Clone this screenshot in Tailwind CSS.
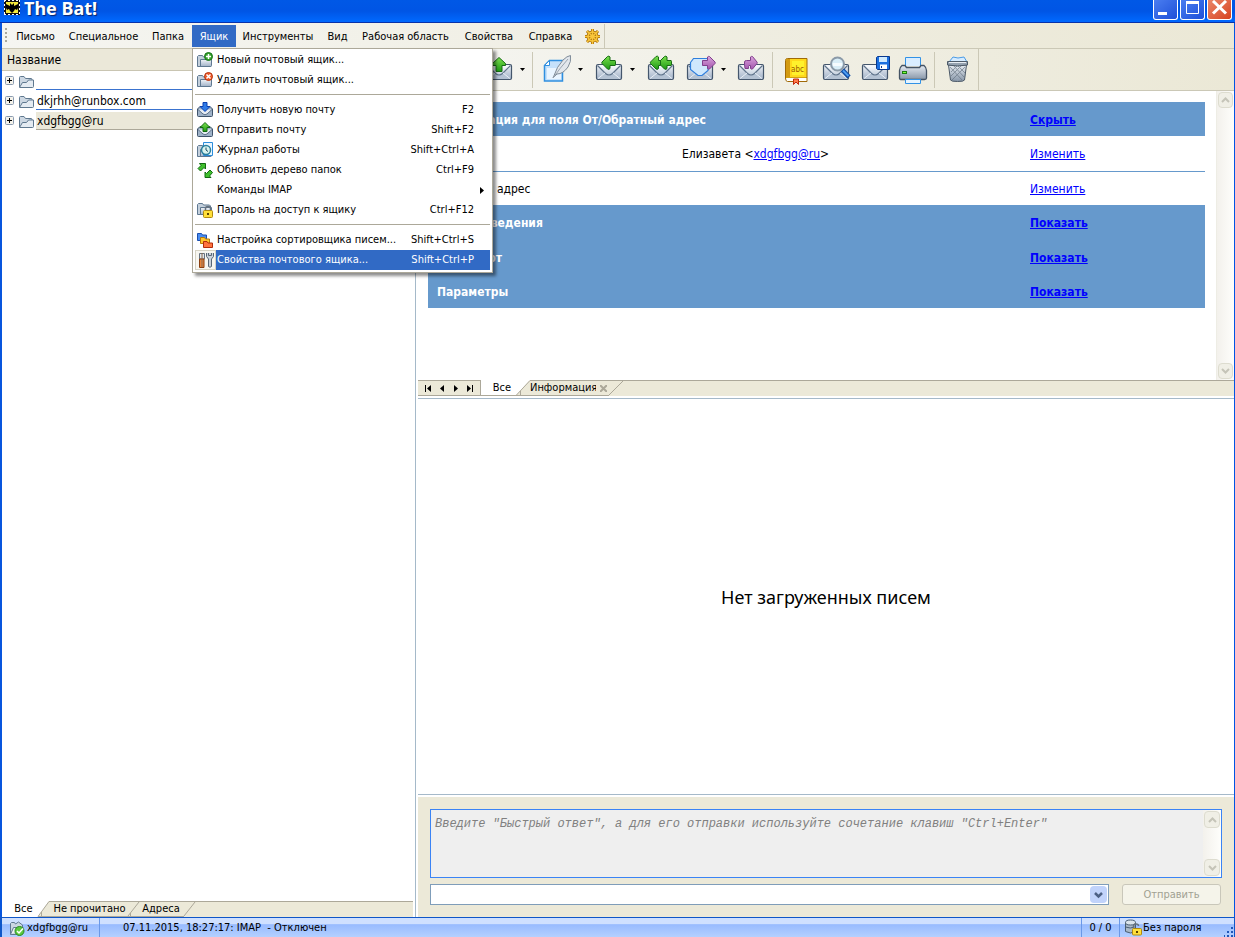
<!DOCTYPE html>
<html lang="ru">
<head>
<meta charset="utf-8">
<title>The Bat!</title>
<script src="https://cdn.jsdelivr.net/npm/@tailwindcss/browser@4"></script>
</head>
<body class="h-screen overflow-hidden bg-white font-['DejaVu_Sans_Condensed','DejaVu_Sans','Noto_Sans',sans-serif] text-[11px] leading-[14px] text-black">

<!-- Shared icon shapes -->
<svg class="absolute size-0" aria-hidden="true">
  <defs>
    <linearGradient id="gEnv" x1="0" y1="0" x2="0" y2="1"><stop offset="0" stop-color="#f1f4f8"/><stop offset="1" stop-color="#9fb0c6"/></linearGradient>
    <linearGradient id="gFlap" x1="0" y1="0" x2="0" y2="1"><stop offset="0" stop-color="#fbfcfe"/><stop offset="1" stop-color="#c3cfdd"/></linearGradient>
    <linearGradient id="gGreen" x1="0" y1="0" x2="0" y2="1"><stop offset="0" stop-color="#7be04e"/><stop offset="1" stop-color="#1f9a14"/></linearGradient>
    <linearGradient id="gPurple" x1="0" y1="0" x2="0" y2="1"><stop offset="0" stop-color="#d9a3dc"/><stop offset="1" stop-color="#a457ae"/></linearGradient>
    <linearGradient id="gGrey" x1="0" y1="0" x2="0" y2="1"><stop offset="0" stop-color="#e6ebf1"/><stop offset="1" stop-color="#8796a8"/></linearGradient>
    <symbol id="env" viewBox="0 0 32 32">
      <path d="M5 10.500h22q1.500 0 1.500 1.500v12q0 1.500-1.500 1.500H5q-1.500 0-1.500-1.500V12q0-1.500 1.500-1.500z" fill="url(#gEnv)" stroke="#44566c" stroke-width="1.200"/>
      <path d="M4.500 25l8-7h7l8 7z" fill="#b4c2d3"/>
      <path d="M4.500 11.500l8 8q3.500 3 7 0l8-8" fill="url(#gFlap)" stroke="#5f738a" stroke-width="1.200"/>
      <path d="M5 24.500l7-5.500M27 24.500l-7-5.500" stroke="#e9eff6" fill="none"/>
    </symbol>
    <symbol id="folder" viewBox="0 0 16 16">
      <path d="M1.500 13V3.500q0-1 1-1h3.500l1.500 2h5.500q1 0 1 1V7" fill="#ccd7e2" stroke="#5f788f"/>
      <path d="M1.500 13.500L4.500 8.500H8.500L10.500 6h5v6.500q0 1-1 1z" fill="#e4ebf2" stroke="#5f788f"/>
    </symbol>
    <symbol id="mailS" viewBox="0 0 16 16">
      <path d="M.5 7l2.500-2.500h10L15.500 7v6.500q0 1-1 1h-13q-1 0-1-1z" fill="#9fb2c8" stroke="#3f536b"/>
      <path d="M1 7.500L6 12q2 1.500 4 0l5-4.500" fill="#e6ecf3" stroke="#5d7189"/>
    </symbol>
    <symbol id="boxS" viewBox="0 0 16 16">
      <path d="M.5 14.500v-10l1-1h4l1 1.500h6l1 1v8.500H.5z" fill="#c4d0dc" stroke="#5f7890"/>
      <path d="M3.500 14.500V7.500h11v6q0 1-1 1z" fill="url(#gEnv)" stroke="#5f7890"/>
    </symbol>
    <symbol id="plus" viewBox="0 0 9 9">
      <rect x=".5" y=".5" width="8" height="8" rx="1" fill="#f4f2ea" stroke="#8a9bb0"/>
      <path d="M2 4.500h5M4.500 2v5" stroke="#000"/>
    </symbol>
  </defs>
</svg>

<div class="flex h-screen flex-col">
  <!-- Title bar -->
  <header class="flex h-[23px] shrink-0 items-start justify-between border-b border-[#0831a8] bg-linear-to-b from-[#0058e6] via-[#0055e5] to-[#0069ff] pl-1 pr-[3px]">
    <div class="flex items-start gap-1">
      <svg class="size-4" viewBox="0 0 16 16"><rect width="16" height="15" fill="#111"/><path d="M0 .5h16M0 14.500h16M.5 0v15M15.500 0v15" stroke="#fff" stroke-dasharray="2 2"/><path d="M2 2h12v11H2z" fill="#f6ea3c"/><path d="M2 4l2 1 2 1V3l2 2 2-2v3l2-1 2-1v4l-1 2-2-1-1 2-2 2-2-2-1-2-2 1-1-2z" fill="#000"/></svg>
      <h1 class="-mt-[3px] font-['Noto_Sans',sans-serif] text-[18px] leading-[22px] font-bold text-white [text-shadow:1px_1px_1px_#0a246a]">The Bat!</h1>
    </div>
    <div class="flex gap-[2px]">
      <button aria-label="Свернуть" class="h-5 w-[25px] rounded-b-[3px] border border-t-0 border-white bg-linear-to-br from-[#4a7df0] to-[#1f4fd8]"><svg class="size-full" viewBox="0 0 23 19"><path d="M4 13.500h9" stroke="#fff" stroke-width="3"/></svg></button>
      <button aria-label="Развернуть" class="h-5 w-[25px] rounded-b-[3px] border border-t-0 border-white bg-linear-to-br from-[#4a7df0] to-[#1f4fd8]"><svg class="size-full" viewBox="0 0 23 19"><path d="M5.500 2v11.500h12V2" fill="none" stroke="#fff"/><path d="M5 2.500h13" stroke="#fff" stroke-width="3"/></svg></button>
      <button aria-label="Закрыть" class="h-5 w-[25px] rounded-b-[3px] border border-t-0 border-white bg-linear-to-br from-[#ea8567] to-[#d6401a]"><svg class="size-full" viewBox="0 0 23 19"><path d="M5 1l13 12.500M18 1L5 13.500" stroke="#fff" stroke-width="3"/></svg></button>
    </div>
  </header>

  <div class="flex min-h-0 flex-1 flex-col border-r border-l-2 border-[#0855dd] border-r-[#0054e3]">
    <!-- Menu bar -->
    <nav class="flex h-[26px] shrink-0 items-stretch border-b border-[#cbc8b6] bg-linear-to-r from-[#f5f5f1] to-[#ebe8d6] pt-[2px]">
      <svg class="h-5 w-[7px]" viewBox="0 0 7 20"><path d="M3 4h2M3 8h2M3 12h2M3 16h2" stroke="#a9a89c" stroke-width="2"/></svg>
      <button class="w-[53px]">Письмо</button>
      <button class="w-[83px]">Специальное</button>
      <button class="w-[46px]">Папка</button>
      <div class="relative ml-px">
        <button class="h-[22px] w-11 bg-[#316ac5] pt-px text-white" aria-expanded="true">Ящик</button>
        <!-- Drop-down menu -->
        <div class="absolute top-[23px] left-0 z-10 w-[301px] border border-[#aca899] bg-white px-[2px] pt-px pb-[2px] shadow-[3px_3px_3px_rgba(0,0,0,.45)]" role="menu">
          <button role="menuitem" class="flex h-5 w-full items-center gap-1 pr-4 pl-[2px]"><svg class="size-4" viewBox="0 0 16 16"><use href="#boxS"/><circle cx="11.500" cy="4.500" r="4" fill="#35a32a" stroke="#17711a"/><path d="M9 4.500h5M11.500 2v5" stroke="#fff" stroke-width="1.500"/></svg><span>Новый почтовый ящик...</span></button>
          <button role="menuitem" class="flex h-5 w-full items-center gap-1 pr-4 pl-[2px]"><svg class="size-4" viewBox="0 0 16 16"><use href="#boxS"/><circle cx="11.500" cy="4.500" r="4" fill="#f05a28" stroke="#b3330f"/><path d="M9.500 2.500l4 4M13.500 2.500l-4 4" stroke="#fff" stroke-width="1.500"/></svg><span>Удалить почтовый ящик...</span></button>
          <hr class="my-1 h-[2px] border-0 border-t border-[#aca899]">
          <button role="menuitem" class="flex h-5 w-full items-center gap-1 pr-4 pl-[2px]"><svg class="size-4" viewBox="0 0 16 16"><use href="#mailS"/><path d="M6 .5h4v4h3L8 9.500 3 4.500h3z" fill="#2f7be8" stroke="#0b3fae"/></svg><span class="flex-1 text-left">Получить новую почту</span><kbd class="font-[inherit]">F2</kbd></button>
          <button role="menuitem" class="flex h-5 w-full items-center gap-1 pr-4 pl-[2px]"><svg class="size-4" viewBox="0 0 16 16"><use href="#mailS"/><path d="M6 9.500h4v-4h3L8 .5 3 5.500h3z" fill="url(#gGreen)" stroke="#126a12"/></svg><span class="flex-1 text-left">Отправить почту</span><kbd class="font-[inherit]">Shift+F2</kbd></button>
          <button role="menuitem" class="flex h-5 w-full items-center gap-1 pr-4 pl-[2px]"><svg class="size-4" viewBox="0 0 16 16"><use href="#boxS"/><path d="M6.500.5h9v13h-9z" fill="#eaf6ff" stroke="#2c8ddb"/><circle cx="9" cy="8" r="4.500" fill="#d9f3ee" stroke="#2a7f9c" stroke-width="1.500"/><path d="M9 5.500V8l2 1.500" fill="none" stroke="#174b66"/></svg><span class="flex-1 text-left">Журнал работы</span><kbd class="font-[inherit]">Shift+Ctrl+A</kbd></button>
          <button role="menuitem" class="flex h-5 w-full items-center gap-1 pr-4 pl-[2px]"><svg class="size-4" viewBox="0 0 16 16"><path d="M2.500 1.500H8.500V7L7 5.500 3.500 9 1 6.500l3-3z" fill="#3fc02c" stroke="#126a12"/><path d="M14 15.500H8V10l1.500 1.500L13 8l2.500 2.500L12.500 14z" fill="#3fc02c" stroke="#126a12"/></svg><span class="flex-1 text-left">Обновить дерево папок</span><kbd class="font-[inherit]">Ctrl+F9</kbd></button>
          <button role="menuitem" class="flex h-5 w-full items-center pr-[6px] pl-[22px]"><span class="flex-1 text-left">Команды IMAP</span><svg class="h-[7px] w-1" viewBox="0 0 4 7"><path d="M0 0l4 3.500L0 7z"/></svg></button>
          <button role="menuitem" class="flex h-5 w-full items-center gap-1 pr-4 pl-[2px]"><svg class="size-4" viewBox="0 0 16 16"><use href="#boxS" y="-2"/><path d="M8.500 9V6.500q0-2 2.500-2t2.500 2V9" fill="none" stroke="#66727f" stroke-width="1.500"/><rect x="6.500" y="8.500" width="9" height="7" rx="1" fill="#ffdf3a" stroke="#b08a10"/><path d="M11 11v2" stroke="#5a4300" stroke-width="2"/></svg><span class="flex-1 text-left">Пароль на доступ к ящику</span><kbd class="font-[inherit]">Ctrl+F12</kbd></button>
          <hr class="my-1 h-[2px] border-0 border-t border-[#aca899]">
          <button role="menuitem" class="flex h-5 w-full items-center gap-1 pr-4 pl-[2px]"><svg class="size-4" viewBox="0 0 16 16"><path d="M.5 8.500v-7h4l1 1.500h4v5.500z" fill="#4a8df0" stroke="#1b4fae"/><path d="M3.500 11.500v-6h4L8.500 7h4v4.500z" fill="#ffc52e" stroke="#b77a08"/><path d="M6.500 15.500v-6h3.500l1 1.500h4.500v4.500z" fill="#ff7440" stroke="#b32c0c"/></svg><span class="flex-1 text-left">Настройка сортировщика писем...</span><kbd class="font-[inherit]">Shift+Ctrl+S</kbd></button>
          <button role="menuitem" class="flex h-5 w-full items-center bg-[#316ac5] pr-4 text-white"><span class="flex h-5 w-[21px] items-center justify-center border border-[#d6d3c4] bg-[#f7f6f0]"><svg class="size-4" viewBox="0 0 16 16"><path d="M1.500 7V1.500h5V7z" fill="#dfe5ea" stroke="#66727f"/><path d="M1.500 7h4.500v8.500H1.500z" fill="#e8843a" stroke="#8a3f10"/><path d="M4 1v14" stroke="#8a6a50"/><path d="M8.500 1v3.500L10.500 7v7.500q1.500 1.500 3 0V7l2-2.500V1M10.500 1v2.500h3V1" fill="#c9d1da" stroke="#596775"/></svg></span><span class="ml-px flex-1 text-left">Свойства почтового ящика...</span><kbd class="font-[inherit]">Shift+Ctrl+P</kbd></button>
        </div>
      </div>
      <button class="w-[84px]">Инструменты</button>
      <button class="w-[35px]">Вид</button>
      <button class="w-[101px]">Рабочая область</button>
      <button class="w-[66px]">Свойства</button>
      <button class="w-[57px]">Справка</button>
      <button class="w-[25px] pl-[5px]" aria-label="Поддержка"><svg class="size-[17px]" viewBox="0 0 17 17"><g fill="none" stroke="#a56a08" stroke-width="3"><circle cx="8.500" cy="8.500" r="4.500"/><path d="M8.500 1v15M1 8.500h15M3 3l11 11M14 3L3 14"/></g><g fill="none" stroke="#f9c63a" stroke-width="1.500"><circle cx="8.500" cy="8.500" r="4.500"/><path d="M8.500 1v15M1 8.500h15M3 3l11 11M14 3L3 14"/></g></svg></button>
      <div class="-mt-px border-l border-[#cbc8b6]"></div>
    </nav>

    <div class="flex min-h-0 flex-1">
      <!-- Account tree -->
      <aside class="flex w-[414px] shrink-0 flex-col border-r border-[#a5b9c9] pr-[2px]">
        <div class="h-[22px] border-b border-[#c9c5b2] bg-[#ebe8d9] pl-[5px] text-[12px] leading-[23px]">Название</div>
        <ul class="flex-1 text-[12px] leading-[19px]">
          <li class="flex h-5 items-center pl-[3px]"><svg class="mb-px size-[9px]"><use href="#plus"/></svg><svg class="mt-px ml-1 h-4 w-4"><use href="#folder"/></svg><span class="ml-[2px] h-[18px] flex-1 border-b border-[#3a73cf]"></span></li>
          <li class="flex h-5 items-center pl-[3px]"><svg class="mb-px size-[9px]"><use href="#plus"/></svg><svg class="mt-px ml-1 h-4 w-4"><use href="#folder"/></svg><span class="ml-[2px] h-[18px] flex-1 border-b border-[#3a73cf] pl-px">dkjrhh@runbox.com</span></li>
          <li class="flex h-5 items-center pl-[3px]"><svg class="mb-px size-[9px]"><use href="#plus"/></svg><svg class="mt-px ml-1 h-4 w-4"><use href="#folder"/></svg><span class="ml-[2px] h-[18px] flex-1 border-b border-[#aca899] bg-[#ebe8d9] pl-px">xdgfbgg@ru</span></li>
        </ul>
        <div class="flex h-4 shrink-0">
          <button class="w-[35px] pl-[8px]">Все</button>
          <svg class="h-4 w-4" viewBox="0 0 16 16"><path d="M16 0H12L1 16h15z" fill="#ece9d8"/><path d="M16 .5H12L1 15.500h15M4.500 11v4" fill="none" stroke="#aca899"/></svg>
          <button class="w-[73px] border-y border-[#aca899] bg-[#ece9d8]">Не прочитано</button>
          <svg class="h-4 w-[14px] bg-[#ece9d8]" viewBox="0 0 14 16"><path d="M0 .5h14M0 15.500h14M13 1L2 15M4.500 12v3" fill="none" stroke="#aca899"/></svg>
          <button class="w-[42px] border-y border-[#aca899] bg-[#ece9d8]">Адреса</button>
          <svg class="h-4 w-[14px] bg-[#ece9d8]" viewBox="0 0 14 16"><path d="M0 .5h14M0 15.500h2M13 1L2 15" fill="none" stroke="#aca899"/></svg>
          <span class="flex-1 border-t border-[#aca899] bg-[#ece9d8]"></span>
        </div>
      </aside>

      <main class="flex min-w-0 flex-1 flex-col">
        <!-- Toolbar -->
        <div class="flex h-[42px] shrink-0 items-center border-b border-[#cbc8b6] bg-linear-to-r from-[#f5f5f1] to-[#ebe8d6] pl-[67px]">
          <button aria-label="Отправить почту" class="size-8"><svg class="size-8" viewBox="0 0 32 32"><use href="#env"/><path d="M13 17.500v-6H9.500v-2L16 3.500l6.500 6v2H19v6z" fill="url(#gGreen)" stroke="#176b14"/></svg></button>
          <button aria-label="Ещё" class="w-[14px]"><svg class="mx-auto h-[3px] w-[5px]" viewBox="0 0 5 3"><path d="M0 0h5L2.500 3z"/></svg></button>
          <i class="ml-[3px] h-9 w-px bg-[#cbc8b6]"></i>
          <button aria-label="Новое письмо" class="ml-[9px] size-8"><svg class="size-8" viewBox="0 0 32 32"><path d="M7.500 6.500h13v20.500h-18v-15.500z" fill="#c5e1fb" stroke="#2f8fe0" stroke-width="1.500"/><path d="M5 14h14v11H5z" fill="#eaf5ff"/><path d="M2.500 11.500h5v-5z" fill="#fff" stroke="#2f8fe0"/><path d="M11 24q4-12 10-18 4-4 7.500-4.500 1 6-2.500 11.500-5 7-11 7z" fill="#e3e7ec" stroke="#7e8b98"/><path d="M11 24Q18 14 26 5" fill="none" stroke="#9aa5b1"/></svg></button>
          <button aria-label="Ещё" class="w-3"><svg class="mx-auto h-[3px] w-[5px]" viewBox="0 0 5 3"><path d="M0 0h5L2.500 3z"/></svg></button>
          <button aria-label="Ответить" class="ml-[7px] size-8"><svg class="size-8" viewBox="0 0 32 32"><use href="#env"/><path d="M22 6.500h-5V3q-1-1.500-2.500-.5L9 8q-.5 1 0 1.500l5.500 5.500q1.500 1 2.500-.5V11.500h5q.5 0 .5-1v-3q0-1-.5-1z" fill="url(#gGreen)" stroke="#176b14"/></svg></button>
          <button aria-label="Ещё" class="w-[14px]"><svg class="mx-auto h-[3px] w-[5px]" viewBox="0 0 5 3"><path d="M0 0h5L2.500 3z"/></svg></button>
          <button aria-label="Ответить всем" class="ml-[6px] size-8"><svg class="size-8" viewBox="0 0 32 32"><use href="#env"/><path d="M26 6.500h-4V3q-1-1.500-2.500-.5L14 8q-.5 1 0 1.500l5.500 5.500q1.500 1 2.500-.5V11.500h4q.5 0 .5-1v-3q0-1-.5-1z" fill="url(#gGreen)" stroke="#176b14"/><path d="M15.500 6.500h-2V3q-1-1.500-2.500-.5L5.500 8q-.5 1 0 1.500L11 15q1.500 1 2.500-.5V11.500h2z" fill="url(#gGreen)" stroke="#176b14"/></svg></button>
          <button aria-label="Переслать" class="ml-2 size-8"><svg class="size-8" viewBox="0 0 32 32"><use href="#env" x="-1"/><path d="M5.500 8.500l3-4h14.500v12l-6 5h-4l-7.500-6z" fill="#cfe8fd" stroke="#2f7fdd" stroke-width="1.200"/><path d="M17.500 6.500h5V3q1-1 2-.5l5.500 5.500q.5 1 0 1.500L24.500 15q-1 .5-2-.5V11.500h-5z" fill="url(#gPurple)" stroke="#81408c"/></svg></button>
          <button aria-label="Ещё" class="w-3"><svg class="mx-auto h-[3px] w-[5px]" viewBox="0 0 5 3"><path d="M0 0h5L2.500 3z"/></svg></button>
          <button aria-label="Перенаправить" class="ml-[6px] size-8"><svg class="size-8" viewBox="0 0 32 32"><use href="#env"/><path d="M9.500 10.500V8q0-1.500 2-1.500h4V3q1-1 2-.5l4.500 5.500q.5 1 0 1.500L17.500 15q-1 .5-2-.5V11.500H14q-.5 0-.5 3h-3.500z" fill="url(#gPurple)" stroke="#81408c"/></svg></button>
          <i class="ml-[5px] h-9 w-px bg-[#cbc8b6]"></i>
          <button aria-label="Адресная книга" class="ml-2 size-8"><svg class="size-8" viewBox="0 0 32 32"><path d="M4.500 24V6.500q0-2 2-2h19.500V24z" fill="#ffd91c" stroke="#a06a08"/><path d="M5 5h4v18H5z" fill="#d39a12"/><path d="M11 7h12v14H11z" fill="#fff12c"/><path d="M4.500 24q0 3.500 2 3.500h19.500V24" fill="#fff" stroke="#a06a08"/><path d="M12.500 25h5v5.500L15 28l-2.500 2.500z" fill="#ff7a4a" stroke="#c0290d"/><text x="10" y="18" font-size="8" font-family="DejaVu Sans Condensed" fill="#a05a00">abc</text></svg></button>
          <button aria-label="Поиск" class="ml-2 size-8"><svg class="size-8" viewBox="0 0 32 32"><use href="#env" x="-1"/><path d="M21.500 16l6.500 7" stroke="#0c4ba6" stroke-width="4.500"/><path d="M22 16.500l5.500 5.500" stroke="#4d9df2" stroke-width="2"/><circle cx="16.500" cy="10" r="6.500" fill="#d9eef8" stroke="#8b9aa8" stroke-width="2"/><path d="M12 10.500h9" stroke="#f6fcff" stroke-width="3"/></svg></button>
          <button aria-label="Сохранить" class="ml-[7px] size-8"><svg class="size-8" viewBox="0 0 32 32"><use href="#env" x="-1"/><path d="M16.500 3.500l1-1h12v13h-12l-1-1z" fill="#1b6fe0" stroke="#08388e"/><path d="M19 3h8v5h-8z" fill="#cfeaff"/><path d="M20 10.500h7V15h-7z" fill="#fff"/><path d="M21.500 12v2" stroke="#08388e"/></svg></button>
          <button aria-label="Печать" class="ml-[5px] size-8"><svg class="size-8" viewBox="0 0 32 32"><path d="M8.500 12V3.500h15V12" fill="#d9edff" stroke="#3292e6"/><path d="M5 11.500h3l1.500 2h13l1.500-2h3q2.500 2 2.500 5V24q0 1.500-2 1.500h-23q-2 0-2-1.500v-7.500q0-3 2.500-5z" fill="url(#gGrey)" stroke="#445364" stroke-width="1.300"/><path d="M5 18.500h5" stroke="#1b7d10" stroke-width="3"/><path d="M6 18.500h3" stroke="#7bff3b"/><path d="M8.500 25.500h15v4h-15z" fill="#e6f4ff" stroke="#3292e6"/></svg></button>
          <i class="ml-[5px] h-9 w-px bg-[#cbc8b6]"></i>
          <button aria-label="Удалить" class="ml-[6px] size-8"><svg class="size-8" viewBox="0 0 32 32"><path d="M8 8l4-5 5 1 6-1 3 5z" fill="#d5ebff" stroke="#4a9be6"/><path d="M7.500 11h18l-2 15q-.5 1.500-7 1.500t-7-1.500z" fill="url(#gGrey)" stroke="#4d5a68"/><path d="M9 13l12 13M13 12l10 11M17 12l7 7M24 13L11 26M20 12L10 22M16 12l-6 6" stroke="#5f6c7a" opacity=".6"/><path d="M6.500 7.500h20V11q-10 2-20 0z" fill="#96a3b1" stroke="#4d5a68"/><path d="M8 8.500h17" stroke="#e8edf2"/></svg></button>
          <i class="ml-[5px] h-[42px] w-px bg-[#cbc8b6]"></i>
        </div>

        <!-- Account information -->
        <section class="flex h-[289px] shrink-0">
          <div class="flex-1 pt-[11px] pr-[11px] pl-3 text-[12px]">
            <table class="w-full table-fixed border-collapse text-left [&_a]:text-[#0000ff] [&_a]:underline [&_td]:px-2 [&_td]:pt-px [&_td]:pb-0 [&_th]:px-[9px] [&_th]:pt-px [&_th]:pb-0">
              <colgroup><col class="w-[246px]"><col><col class="w-[183px]"></colgroup>
              <tbody>
                <tr class="h-[34px] bg-[#6699cc] text-white"><th colspan="2">Информация для поля От/Обратный адрес</th><td><a href="#" class="font-bold">Скрыть</a></td></tr>
                <tr class="h-[35px]"><td class="border-b border-[#6699cc]"></td><td class="border-b border-[#6699cc]">Елизавета &lt;<a href="#">xdgfbgg@ru</a>&gt;</td><td class="border-b border-[#6699cc]"><a href="#">Изменить</a></td></tr>
                <tr class="h-[34px]"><td>Обратный адрес</td><td></td><td><a href="#">Изменить</a></td></tr>
                <tr class="h-[35px] bg-[#6699cc] text-white"><th colspan="2">Общие сведения</th><td><a href="#" class="font-bold">Показать</a></td></tr>
                <tr class="h-[34px] bg-[#6699cc] text-white"><th colspan="2">Транспорт</th><td><a href="#" class="font-bold">Показать</a></td></tr>
                <tr class="h-[34px] bg-[#6699cc] text-white"><th colspan="2">Параметры</th><td><a href="#" class="font-bold">Показать</a></td></tr>
              </tbody>
            </table>
          </div>
          <div class="flex w-[18px] flex-col justify-between border-l border-[#eeede5] bg-linear-to-r from-[#f3f1ec] to-[#fefefb]">
            <button aria-label="Вверх" class="m-px h-4 rounded-sm border border-[#dddccf] bg-[#f0efe6]"><svg class="mx-auto h-[6px] w-[9px]" viewBox="0 0 9 6"><path d="M1 5l3.500-3.500L8 5" fill="none" stroke="#c5c4b8" stroke-width="2"/></svg></button>
            <button aria-label="Вниз" class="m-px h-4 rounded-sm border border-[#dddccf] bg-[#f0efe6]"><svg class="mx-auto h-[6px] w-[9px]" viewBox="0 0 9 6"><path d="M1 1l3.500 3.500L8 1" fill="none" stroke="#c5c4b8" stroke-width="2"/></svg></button>
          </div>
        </section>

        <!-- View tabs -->
        <div class="flex h-4 shrink-0 pl-[2px]">
          <div class="flex w-[63px] items-center justify-around border-y border-r border-[#aca899] bg-[#ece9d8] px-1">
            <button aria-label="Первая"><svg class="h-[7px] w-[7px]" viewBox="0 0 7 7"><path d="M0 0h1v7H0zM6 0v7L2 3.500z"/></svg></button>
            <button aria-label="Предыдущая"><svg class="h-[7px] w-[7px]" viewBox="0 0 7 7"><path d="M5 0v7L1 3.500z"/></svg></button>
            <button aria-label="Следующая"><svg class="h-[7px] w-[7px]" viewBox="0 0 7 7"><path d="M2 0v7l4-3.500z"/></svg></button>
            <button aria-label="Последняя"><svg class="h-[7px] w-[7px]" viewBox="0 0 7 7"><path d="M6 0h1v7H6zM1 0v7l4-3.500z"/></svg></button>
          </div>
          <button class="w-[35px] border-b border-[#aca899] pl-[7px]">Все</button>
          <svg class="h-4 w-[14px]" viewBox="0 0 14 16"><path d="M14 0L0 15.500h14z" fill="#ece9d8"/><path d="M14 .5L0 15.500h14M4.500 11v4" fill="none" stroke="#aca899"/></svg>
          <button class="w-[66px] border-y border-[#aca899] bg-[#ece9d8]">Информация</button>
          <button aria-label="Закрыть вкладку" class="w-[13px] border-y border-[#aca899] bg-[#ece9d8] pl-[4px]"><svg class="h-[7px] w-[7px]" viewBox="0 0 7 7"><path d="M0 0l7 7M7 0L0 7" stroke="#aca899" stroke-width="2"/></svg></button>
          <svg class="h-4 w-[14px] bg-[#ece9d8]" viewBox="0 0 14 16"><path d="M0 .5h14M14 1L0 15" fill="none" stroke="#aca899"/></svg>
          <span class="flex-1 border-t border-[#aca899] bg-[#ece9d8]"></span>
        </div>

        <!-- Message preview -->
        <section class="mt-[2px] ml-[2px] flex min-h-0 flex-1 items-center justify-center border-y border-[#a5b9c9]">
          <p class="font-['Noto_Sans',sans-serif] text-[18px] leading-6">Нет загруженных писем</p>
        </section>

        <!-- Quick reply -->
        <form class="mt-[2px] ml-[2px] flex h-[120px] shrink-0 flex-col gap-[6px] bg-[#ece9d8] px-3 pt-3">
          <div class="flex h-[69px] border border-[#3a83f5] bg-[#efefef]">
            <textarea aria-label="Быстрый ответ" class="flex-1 resize-none px-1 py-[7px] font-['Liberation_Mono',monospace] text-[12px] italic placeholder:text-[#808080]" placeholder='Введите "Быстрый ответ", а для его отправки используйте сочетание клавиш "Ctrl+Enter"'></textarea>
            <div class="flex w-[18px] flex-col justify-between bg-linear-to-r from-[#f3f1ec] to-[#fefefb]">
              <button type="button" aria-label="Вверх" class="m-px h-[17px] rounded-sm border border-[#dddccf] bg-[#f0efe6]"><svg class="mx-auto h-[6px] w-[9px]" viewBox="0 0 9 6"><path d="M1 5l3.500-3.500L8 5" fill="none" stroke="#c5c4b8" stroke-width="2"/></svg></button>
              <button type="button" aria-label="Вниз" class="m-px h-[17px] rounded-sm border border-[#dddccf] bg-[#f0efe6]"><svg class="mx-auto h-[6px] w-[9px]" viewBox="0 0 9 6"><path d="M1 1l3.500 3.500L8 1" fill="none" stroke="#c5c4b8" stroke-width="2"/></svg></button>
            </div>
          </div>
          <div class="flex h-[21px] gap-[13px]">
            <div class="relative flex flex-1">
              <select aria-label="Шаблон" class="flex-1 appearance-none border border-[#7f9db9] bg-white"><option></option></select>
              <svg class="pointer-events-none absolute top-[2px] right-[2px] h-[17px] w-[17px] rounded-sm bg-[#c1d3fb]" viewBox="0 0 17 17"><path d="M5 7l3.500 3.500L12 7" fill="none" stroke="#4d6185" stroke-width="2.500"/></svg>
            </div>
            <button type="button" class="mr-px w-[99px] rounded-[3px] border border-[#c9c7ba] bg-[#f5f4ea] pt-px text-[#a1a192]">Отправить</button>
          </div>
        </form>
      </main>
    </div>
  </div>

  <!-- Status bar -->
  <footer class="flex h-5 shrink-0 items-stretch border-t border-r border-l-2 border-[#0f56c8] bg-linear-to-b from-[#cfe0ff] from-30% via-[#98bbff] via-35% to-[#b4d0ff] leading-5">
    <span class="flex w-[97px] items-center gap-[2px] pl-[7px]"><svg class="size-4" viewBox="0 0 16 16"><path d="M1.500 14.500v-11l1-1h3l1 1.500 3-2 4 3v9.500z" fill="#cbd6e1" stroke="#5f7890"/><path d="M1.500 14.500l3-7h10" fill="#eef2f6" stroke="#5f7890"/><circle cx="10.500" cy="11" r="4.500" fill="#5cc93f" stroke="#2b8a22"/><path d="M8 11l2 2 4-4.500" fill="none" stroke="#fff" stroke-width="1.500"/></svg>xdgfbgg@ru</span>
    <span class="flex-1 border-l border-[#6a98e8] pl-[23px] whitespace-pre">07.11.2015, 18:27:17: IMAP  - Отключен</span>
    <span class="w-[38px] border-l border-[#6a98e8] text-center">0 / 0</span>
    <span class="flex w-[105px] items-center gap-px border-l border-[#6a98e8] pl-[5px]"><svg class="size-[17px]" viewBox="0 0 17 17"><path d="M.5 3.500v9q5 3 10 0v-9" fill="#aab9c8" stroke="#4a5e73"/><ellipse cx="5.500" cy="3.500" rx="5" ry="2.500" fill="#dbe4ec" stroke="#4a5e73"/><path d="M.5 8q5 2 9 0" fill="none" stroke="#4a5e73"/><path d="M8.500 9.500V7q0-2 2.500-2t2.500 2" fill="none" stroke="#66727f" stroke-width="1.500"/><rect x="7.500" y="9.500" width="9" height="6.500" rx="1" fill="#ffdf3a" stroke="#b08a10"/><path d="M12 12v2" stroke="#5a4300" stroke-width="2"/></svg>Без пароля</span>
    <svg class="h-[19px] w-[10px]" viewBox="0 0 10 19"><path d="M7 9h2v2H7zM3 13h2v2H3zM7 13h2v2H7zM0 17h1v2H0zM3 17h2v2H3zM7 17h2v2H7z" fill="#2257b8"/></svg>
  </footer>
</div>
</body>
</html>
